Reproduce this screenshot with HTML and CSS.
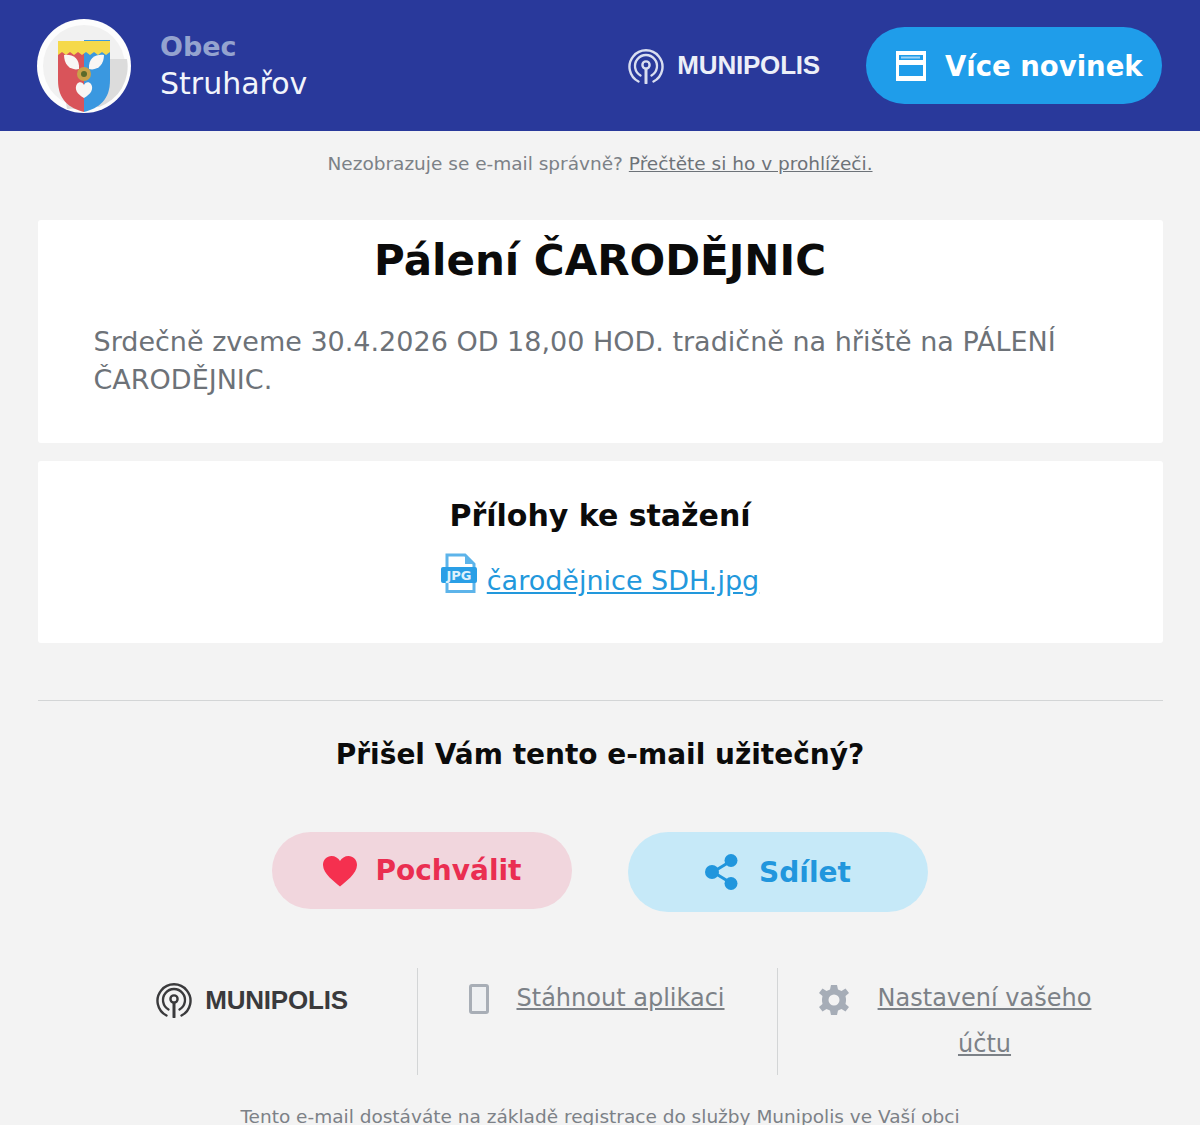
FILE: index.html
```html
<!DOCTYPE html>
<html lang="cs">
<head>
<meta charset="utf-8">
<title>Pálení ČARODĚJNIC</title>
<link rel="stylesheet" href="styles.css">
</head>
<body>
<header class="top">
  <div class="crest">
    <svg viewBox="0 0 94 94" width="94" height="94">
      <circle cx="47" cy="47" r="47" fill="#fdfdfd"/>
      <circle cx="47" cy="47" r="41" fill="#f1f1f1"/>
      <path d="M30 90 L22 40 L90 40 A43 43 0 0 1 62 88 Z" fill="#dcdcdc"/>
      <circle cx="47" cy="47" r="47" fill="none" stroke="#fdfdfd" stroke-width="6" transform="translate(0 0) scale(1)" opacity="0"/>
      <path d="M22 22 H72 V64 Q72 84 47 96 Q22 84 22 64 Z" fill="none"/>
      <path d="M21 23 H47 V94 C32 90 21 82 21 62 Z" fill="#d9545a" transform="translate(0 -1)"/>
      <path d="M47 22 H73 V62 C73 82 62 90 47 94 Z" fill="#3a98e0" transform="translate(0 -1)"/>
      <path d="M21 22 H73 V33 L69 36 L65 33 L61 36 L57 33 L53 36 L49 33 L45 36 L41 33 L37 36 L33 33 L29 36 L25 33 L21 36 Z" fill="#f5d94b"/>
      <path d="M27 36 C35 35 43 39 42 50 C34 52 27 46 27 36 Z" fill="#f8f6f4"/>
      <path d="M67 36 C59 35 51 39 52 50 C60 52 67 46 67 36 Z" fill="#f8f6f4"/>
      <path d="M47 79 C40 75 37 70 40 65 C42 62 46 63 47 66 C48 63 52 62 54 65 C57 70 54 75 47 79 Z" fill="#f8f6f4"/>
      <circle cx="47" cy="55" r="7" fill="#c9a24a"/>
      <circle cx="47" cy="55" r="3" fill="#5a6a2a"/>
    </svg>
  </div>
  <div class="town">
    <div class="town-kind">Obec</div>
    <div class="town-name">Struhařov</div>
  </div>
  <div class="brand brand-light">
    <svg class="brand-mark" viewBox="0 0 36 36" width="36" height="36"><use href="#signal"/></svg>
    <span class="brand-word">MUNIPOLIS</span>
  </div>
  <a class="more" href="#">
    <svg viewBox="0 0 30 30" width="30" height="30">
      <path fill-rule="evenodd" d="M0 0H30V30H0Z M3 4V9H27V4Z M3 14V25H27V14Z" fill="#fff"/>
      <path d="M5 5.5H24V7.5H5Z" fill="#9fd3f6"/>
    </svg>
    <span>Více novinek</span>
  </a>
</header>

<p class="notice">Nezobrazuje se e-mail správně? <a href="#">Přečtěte si ho v prohlížeči.</a></p>

<main class="content">
  <section class="card article">
    <h1>Pálení ČARODĚJNIC</h1>
    <p>Srdečně zveme 30.4.2026 OD 18,00 HOD. tradičně na hřiště na PÁLENÍ ČARODĚJNIC.</p>
  </section>

  <section class="card files">
    <h2>Přílohy ke stažení</h2>
    <div class="file">
      <svg class="file-icon" viewBox="0 0 36 42" width="36" height="42">
        <path d="M6 2H24L33 11V38.500H6Z" fill="#fff" stroke="#5db4ea" stroke-width="3"/>
        <path d="M24 2V11H33Z" fill="#5db4ea"/>
        <rect x="0" y="14" width="36" height="16" rx="2" fill="#2a9fe6"/>
        <text x="18" y="27" class="file-tag" text-anchor="middle">JPG</text>
      </svg>
      <a href="#">čarodějnice SDH.jpg</a>
    </div>
  </section>

  <hr class="rule">

  <h3 class="ask">Přišel Vám tento e-mail užitečný?</h3>

  <div class="actions">
    <a class="pill pill-like" href="#">
      <svg viewBox="0 0 36 32" width="36" height="32"><path d="M18 31.500C13 27 1 19 1 10C1 4.500 5 1 9.500 1C13 1 16.500 3 18 6C19.500 3 23 1 26.500 1C31 1 35 4.500 35 10C35 19 23 27 18 31.500Z" fill="#f5304f"/></svg>
      <span>Pochválit</span>
    </a>
    <a class="pill pill-share" href="#">
      <svg viewBox="0 0 34 36" width="34" height="36">
        <path d="M26 7L8 18L26 29" fill="none" stroke="#2196dd" stroke-width="3"/>
        <circle cx="26" cy="6.500" r="6.500" fill="#2196dd"/>
        <circle cx="7" cy="18" r="7" fill="#2196dd"/>
        <circle cx="26" cy="29.500" r="6.500" fill="#2196dd"/>
      </svg>
      <span>Sdílet</span>
    </a>
  </div>

  <div class="links">
    <div class="link-cell cell-brand">
      <div class="brand brand-dark">
        <svg class="brand-mark" viewBox="0 0 36 36" width="36" height="36"><use href="#signal"/></svg>
        <span class="brand-word">MUNIPOLIS</span>
      </div>
    </div>
    <div class="link-cell cell-app">
      <svg viewBox="0 0 20 30" width="20" height="30">
        <rect x="1.500" y="1.500" width="17" height="27" rx="1.500" fill="#eef0f2" stroke="#a8aeb6" stroke-width="3"/>
      </svg>
      <a href="#">Stáhnout aplikaci</a>
    </div>
    <div class="link-cell cell-account">
      <svg viewBox="0 0 32 32" width="32" height="32">
        <path fill-rule="evenodd" fill="#a6adb7" d="M13 1H19L20 5.500L23.500 7L27.500 4.500L31 9L27.500 12L28 15V17L27.500 20L31 23L27.500 27.500L23.500 25L20 26.500L19 31H13L12 26.500L8.500 25L4.500 27.500L1 23L4.500 20L4 17V15L4.500 12L1 9L4.500 4.500L8.500 7L12 5.500Z M16 10.500A5.500 5.500 0 1 0 16 21.500A5.500 5.500 0 1 0 16 10.500Z"/>
      </svg>
      <a href="#">Nastavení vašeho účtu</a>
    </div>
  </div>

  <p class="foot">Tento e-mail dostáváte na základě registrace do služby Munipolis ve Vaší obci</p>
</main>

<svg class="defs" width="0" height="0" aria-hidden="true">
  <symbol id="signal" viewBox="0 0 36 36">
    <g fill="none" stroke="currentColor" stroke-width="2.400" stroke-linecap="round">
      <path d="M10.500 33.500A16.500 16.500 0 1 1 25.500 33.500"/>
      <path d="M12.500 27.500A11 11 0 1 1 23.500 27.500"/>
      <circle cx="18" cy="17" r="3.600"/>
      <path d="M18 21V35" stroke-width="3"/>
    </g>
  </symbol>
</svg>
</body>
</html>
```

FILE: styles.css
```css
html, body {
  margin: 0;
  height: 1125px;
  overflow: hidden;
}
body {
  background: #f3f3f3;
  font-family: "DejaVu Sans", sans-serif;
  color: #6d7278;
}
a { color: inherit; }
.defs { position: absolute; }

.top {
  display: flex;
  align-items: center;
  height: 131px;
  padding: 0 38px 0 37px;
  background: #29399b;
  box-sizing: border-box;
}
.crest { width: 94px; height: 94px; margin-right: 29px; }
.crest svg { display: block; }
.town { flex: 1; padding-top: 1px; }
.town-kind { font-size: 27px; font-weight: 700; line-height: 36px; color: #94a3cf; }
.town-name { font-size: 30px; line-height: 38px; color: #f2f5fb; }

.brand { display: flex; align-items: center; gap: 13px; }
.brand-word {
  font-family: "Liberation Sans", sans-serif;
  font-weight: 700;
  font-size: 26px;
  letter-spacing: -0.2px;
}
.brand-light { color: #d9def0; margin-right: 46px; }
.brand-light .brand-word { color: #eceff8; }
.brand-dark { color: #3a3a3c; }
.brand-mark { display: block; flex: none; }

.more {
  display: flex;
  align-items: center;
  gap: 19px;
  width: 296px;
  height: 77px;
  box-sizing: border-box;
  padding: 0 0 0 30px;
  border-radius: 39px;
  background: #1f9dea;
  color: #fff;
  font-size: 27.500px;
  font-weight: 700;
  text-decoration: none;
}

.notice {
  margin: 0;
  height: 89px;
  padding-top: 22px;
  box-sizing: border-box;
  text-align: center;
  font-size: 18.500px;
  line-height: 22px;
  color: #7c8187;
}
.notice a { color: #6d7278; }

.content { padding: 0 37.500px; }
.card { background: #fff; border-radius: 3px; }

.article { height: 223px; padding: 15px 56px 0; box-sizing: border-box; margin-bottom: 18px; }
.article h1 {
  margin: 0 0 36px;
  text-align: center;
  font-size: 42px;
  line-height: 52px;
  color: #0b0b0b;
}
.article p { margin: 0; font-size: 27px; line-height: 38px; color: #6d7278; }

.files { height: 182px; padding-top: 36px; box-sizing: border-box; }
.files h2 {
  margin: 0 0 18px;
  text-align: center;
  font-size: 30px;
  line-height: 38px;
  color: #0b0b0b;
}
.file { display: flex; justify-content: center; gap: 10px; align-items: flex-end; font-size: 27px; line-height: 38px; color: #2298dc; }
.file-icon { display: block; margin: 0 0 5px; }
.file-tag { font-family: "DejaVu Sans", sans-serif; font-size: 13px; font-weight: 700; fill: #dff1fc; }

.rule { margin: 57px 0 0; border: 0; border-top: 1px solid #d3d5d6; }

.ask {
  margin: 36px 0 0;
  text-align: center;
  font-size: 28px;
  line-height: 36px;
  color: #0b0b0b;
}

.actions { display: flex; justify-content: center; align-items: flex-start; gap: 56px; margin-top: 59px; }
.pill {
  display: flex;
  justify-content: center;
  align-items: center;
  width: 300px;
  border-radius: 40px;
  font-size: 28px;
  font-weight: 700;
  text-decoration: none;
}
.pill-like { height: 77px; gap: 17px; background: #f1d6dd; color: #ea2e51; }
.pill-share { height: 80px; gap: 20px; background: #c6e9f8; color: #2196dd; }

.links { display: flex; margin-top: 56px; padding: 0 50px; height: 107px; }
.link-cell {
  display: flex;
  justify-content: center;
  align-items: flex-start;
  box-sizing: border-box;
  font-size: 24px;
  line-height: 46px;
  color: #7c8187;
}
.cell-brand { width: 330px; padding-top: 9px; border-right: 1px solid #d3d5d6; }
.cell-app { width: 360px; gap: 27px; border-right: 1px solid #d3d5d6; padding-top: 7px; }
.cell-app svg { margin-top: 9px; flex: none; }
.cell-account { flex: 1; gap: 27px; padding: 7px 20px 0 40px; text-align: center; }
.cell-account svg { margin-top: 9px; flex: none; }

.foot {
  margin: 30px 0 0;
  text-align: center;
  font-size: 18.500px;
  line-height: 24px;
  color: #7c8187;
}
```
